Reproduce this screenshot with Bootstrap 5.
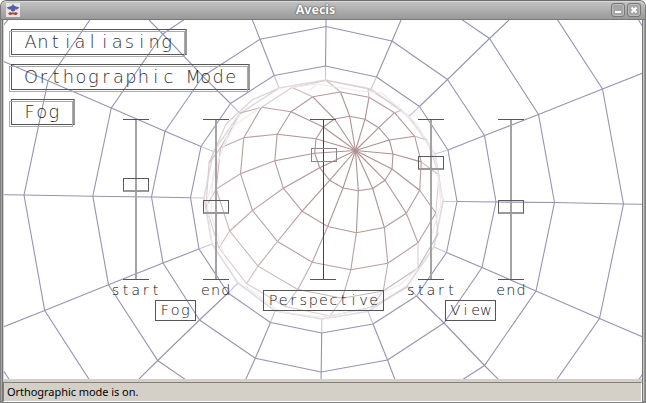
<!DOCTYPE html>
<html lang="en">
<head>
<meta charset="utf-8">
<title>Avecis</title>
<link href="https://cdn.jsdelivr.net/npm/bootstrap@5.3.0/dist/css/bootstrap.min.css" rel="stylesheet">
<style>
html,body{height:100%;margin:0;overflow:hidden;background:#fff}
.win{width:646px;height:403px;background:#d4d0c8;border-radius:6px 6px 0 0;overflow:hidden}
.titlebar{height:20px;padding:0 4px 0 5px;background:linear-gradient(#c4c4c4,#999);border:1px solid #777;border-top-color:#6c6c6c;border-radius:6px 6px 0 0;box-shadow:inset 0 1px #d8d8d8}
.title{font:bold 12.5px/18px "Noto Sans",sans-serif;color:#fff;text-shadow:0 0 1px #555,0 0 1px #555,0 0 2px #666}
.wbtn{width:14px;height:14px;padding:0;border:1px solid #777;border-radius:3px;background:#a6a6a6;box-shadow:inset 0 0 0 1px #bcbcbc;display:flex;align-items:center;justify-content:center}
.framebody{height:383px;border:solid #808080;border-width:0 1px 2px;background:#d4d0c8;box-shadow:inset 1px 0 #aaa,inset 2px 0 #727272,inset -1px 0 #999,inset -2px 0 #c8c8c8,inset -3px 0 #777;padding:0 3px 0 3px}
.view{height:359px;background:#fff;overflow:hidden}
.scene{position:absolute;left:-4px;top:-20px;fill:none}
.toggles{position:relative;padding:9px 0 0 7px;gap:9px}
.tg{position:relative;height:26px;padding:0;border:1px solid #555;border-right:2px solid #999;border-radius:0;background:none}
.tg::after{content:"";position:absolute;left:-3px;top:1px;right:0;bottom:-3px;border:1px solid #aaa}
.slide{position:absolute;top:99px;width:26px;height:161px;border:solid #555;border-width:1px 0}
.slide i{position:absolute;left:12px;top:0;width:2px;height:159px;background:#a4a4a4}
.slide b{position:absolute;left:0;width:26px;height:14px;border:1px solid #5a5a5a;border-bottom:2px solid #999}
.slide .fine{left:13px;width:1px;background:#444}
.slide .soft{border:1px solid #888;left:1px}
.mono{position:absolute;height:21px}
.box{border:1px solid #555}
.cells{display:block;overflow:visible;font:200 14.4px "DejaVu Sans Light","DejaVu Sans ExtraLight","DejaVu Sans",sans-serif;fill:#111;text-anchor:middle}
.tg .cells{font-size:17.8px;fill:#2c2c2c}
.status{height:20px;margin:3px 0 0 -1px;border:1px solid #808080;border-right-color:#fff;border-bottom-color:#fff;padding-left:3px;font:11px/18px "Noto Sans",sans-serif;letter-spacing:-.05px;color:#000}
</style>
</head>
<body>
<div class="win d-flex flex-column">
 <header class="titlebar d-flex align-items-center flex-shrink-0">
  <svg width="14" height="14" viewBox="0 0 14 14"><path fill="#e6e6e6" d="M0 0h14v14H0z"/><path fill="#5a5ab4" d="M.5 4.500 4 3.500l3-1.500 3 1.500 3.500 1-2.500 2H9v1.500H5V6.500H3z"/><path stroke="#4a6a6a" d="M7 1v9" stroke-width=".8"/><path fill="#a84444" d="M2 10.500 4 9l3 1 3-1 2 1.500-2 1.700-3-1-3 1z"/></svg>
  <div class="title flex-grow-1 text-center">Avecis</div>
  <div class="d-flex" style="gap:2px">
   <div class="wbtn"><svg width="8" height="8"><path d="M1 6h6" stroke="#fff" stroke-width="2"/></svg></div>
   <div class="wbtn"><svg width="8" height="8"><path d="M1.500 1.500l5 5m0-5l-5 5" stroke="#fff" stroke-width="2"/></svg></div>
  </div>
 </header>
 <div class="framebody">
  <main class="view position-relative">
   <svg class="scene" width="646" height="403" id="scene"></svg>
   <div class="toggles d-flex flex-column align-items-start">
    <button class="tg" style="width:176px"><svg class="cells" width="170" height="24"><text data-x="18.500" data-p="12.37" y="18.3">Antialiasing</text></svg></button>
    <button class="tg" style="width:239px"><svg class="cells" width="230" height="24"><text data-x="19" data-p="12.48" y="18.3">Orthographic Mode</text></svg></button>
    <button class="tg" style="width:64px"><svg class="cells" width="60" height="24"><text data-x="17.500" data-p="12.2" y="18.3">Fog</text></svg></button>
   </div>
   <div class="slide" style="left:119px"><i></i><b style="top:58px"></b></div>
   <div class="slide" style="left:199px"><i></i><b style="top:80px"></b></div>
   <div class="slide" style="left:306px"><i class="fine"></i><b class="soft" style="top:28px"></b></div>
   <div class="slide" style="left:414px"><i></i><b style="top:36px"></b></div>
   <div class="slide" style="left:494px"><i></i><b style="top:80px"></b></div>
   <div class="mono" style="left:107px;top:260px"><svg class="cells" width="50" height="20"><text data-x="4.5" data-p="10.05" y="14.8">start</text></svg></div>
   <div class="mono" style="left:197px;top:260px"><svg class="cells" width="30" height="20"><text data-x="4.500" data-p="10.1" y="14.8">end</text></svg></div>
   <div class="mono" style="left:402px;top:260px"><svg class="cells" width="50" height="20"><text data-x="4.800" data-p="10.05" y="14.8">start</text></svg></div>
   <div class="mono" style="left:492px;top:260px"><svg class="cells" width="30" height="20"><text data-x="4.800" data-p="10.1" y="14.8">end</text></svg></div>
   <div class="mono box" style="left:151px;top:280px;width:41px"><svg class="cells" width="38" height="19"><text data-x="9" data-p="10.1" y="14">Fog</text></svg></div>
   <div class="mono box" style="left:259px;top:270px;width:121px"><svg class="cells" width="118" height="19"><text data-x="9" data-p="10.07" y="14">Perspective</text></svg></div>
   <div class="mono box" style="left:441px;top:280px;width:51px"><svg class="cells" width="48" height="19"><text data-x="9.500" data-p="10.1" y="14">View</text></svg></div>
  </main>
  <footer class="status">Orthographic mode is on.</footer>
 </div>
</div>
<script>
// Every letter is centred in a cell of fixed pitch
document.querySelectorAll('.cells text').forEach(t=>t.setAttribute('x',[...t.textContent].map((_,i)=>(+t.dataset.x+i*t.dataset.p).toFixed(2)).join(' ')));
const svg=document.getElementById('scene');
function line(pts,c,w){const e=document.createElementNS('http://www.w3.org/2000/svg','polyline');
 e.setAttribute('points',pts.join(' '));e.setAttribute('stroke',c);e.setAttribute('stroke-width',w||1.1);svg.appendChild(e);}
const B='#9494b4',F='#c6c6d8',G='#dedbe3';
// Spokes of the outer sphere, clockwise from the top, each from the rim outwards
const spokes=[
[[325.5,80],[325.5,66],[326,26.5],[326,19]],
[[371,89],[376.5,77],[392,41],[401,20]],
[[409,116.5],[419.5,106.5],[447.5,79.5],[489.5,38.5],[509,20]],
[[435,154],[448,150],[484.5,135.5],[538.5,114.500],[602.5,89],[644,72.5]],
[[443,201.5],[457,201.5],[496,202],[554.5,202.5],[623.5,204],[644,204.3]],
[[434,247],[446.5,252.5],[482,267.5],[536,291],[599.5,318.5],[644,337.5]],
[[407,286],[416.5,296],[444,323],[484.5,365.5],[499,380]],
[[368,311.5],[373,324],[387.5,360],[395.5,381]],
[[321.8,319],[321.7,333],[321.2,372],[321,381]],
[[275,311],[270.5,322.5],[255.3,358.2],[245,381]],
[[238,283],[228,293],[199.5,320],[157.7,360.5],[138,380]],
[[212,244],[199,249],[163,263],[108.5,284.7],[44.700,310.5],[3,327]],
[[204,198],[190.5,197.7],[151.500,197],[92.8,196.2],[24,195],[3,194.700]],
[[213.5,151.500],[201,146.5],[165,131.3],[111.3,108],[48,80.8],[3,61.2]],
[[240,113.5],[230.5,103.5],[203,76.3],[162.8,34],[149,20]],
[[279,88],[274.200,75.500],[260,39.2],[252,19]]];
spokes.forEach((s,i)=>{line(s.slice(0,2),F);line(s.slice(1),B);
 const n=spokes[(i+1)%16];
 line([s[0],n[0]],G,1.6);line([s[1],n[1]],B);line([s[2],n[2]],B);});
line([[461,19],spokes[2][3],spokes[3][3],spokes[4][3],spokes[5][3],spokes[6][3],[462,380]],B);
line([[186,380],spokes[10][3],spokes[11][3],spokes[12][3],spokes[13][3],spokes[14][3],[185,19]],B);
line([[557,19],spokes[3][4],spokes[4][4],spokes[5][4],[556.5,380]],B);
line([[90.500,19],spokes[13][4],spokes[12][4],spokes[11][4],[89.500,380]],B);
[[[3,26],[8.500,19]],[[638,19],[644,29]],[[3,370],[9.500,380]],[[638.500,380],[644,372]]].forEach(p=>line(p,B));
// Latitude rings of the inner sphere, from the pole outwards
const P=[355.5,150.5];
const a=[[349.7,116.3],[365,119.3],[378.7,127.7],[389.3,140],[393,154],[392,169],[385,180.3],[372.7,188.5],[358.3,190.8],[343,188],[329.7,180.3],[319.7,167.7],[314.7,153.3],[316,138.7],[323.4,127],[334.500,119]];
const b=[[340.5,92],[369,97.3],[394.5,112.7],[414.7,136.3],[421.2,161.9],[419.7,190.3],[406.3,213.200],[384.3,227.500],[356.4,232.7],[327.7,226.5],[302.1,211.200],[283.3,188.2],[274.8,160.8],[277.2,134.2],[291,111.8],[312.8,96.8]];
const c=[[326.500,80.5],[368,88.8],[402,110],[427,140],[439,175],[435.8,213],[418,242.7],[387.8,263.3],[350.8,269.8],[312.2,262.2],[277.5,241.5],[252.5,210.5],[240.5,173.8],[243.8,137.7],[261.500,107.200],[292,87.5]];
const C1='#b09494',C2='#c4acac',C3='#dccdcd',C4='#efe9ea';
for(let i=0;i<16;i++){const j=(i+1)%16;line([P,a[i]],'#af9292');line([a[i],a[j]],C1);line([a[i],b[i]],C1);line([b[i],b[j]],'#b59a9a');
 line([b[i],c[i]],i>4&&i<15?'#b9a0a0':'#ccb9ba');line([c[i],c[j]],i>4&&i<14?'#b9a0a0':C3);}
const d=[[438,234],[418,268],[383.3,291],[342.3,298.3],[297.8,289.5],[258,266.2],[229.7,231],[216.2,189],[220.5,147.8],[240.5,113]];
line(d,'#cbb6b6');
[[5,0],[6,1],[7,2],[8,3],[9,4],[10,5],[11,6],[12,7],[13,8],[14,9]].forEach(([m,n])=>line([c[m],d[n]],n<2?C3:C2));
const e=[[408,287],[371.5,307],[330,316],[285,306.5],[246.5,283.5],[219,248],[206,207],[209,163],[226,124],[252,100],[277,89]];
line(e,C3,1.1);
for(let i=1;i<8;i++)line([d[i+1],e[i]],'#d0bfbf');
// Rim edges that are nearly lost in the fog
[[[317,84],[360,91],[382,93]],[[240,113.5],[222,150],[207,200],[212,244]],[[261,107],[230,128],[213,175],[211,215],[224,255]],[[382,93],[417,124],[436,158],[441,205],[430,240]],[[402,110],[432,147],[443,200]],[[418,268],[400,285],[365,300]],[[245,286],[280,312],[322,317],[368,309]],[[292,87.5],[317,84],[310,90]]].forEach(p=>line(p,C4));
</script>
<script src="https://cdn.jsdelivr.net/npm/bootstrap@5.3.0/dist/js/bootstrap.bundle.min.js"></script>
</body>
</html>
